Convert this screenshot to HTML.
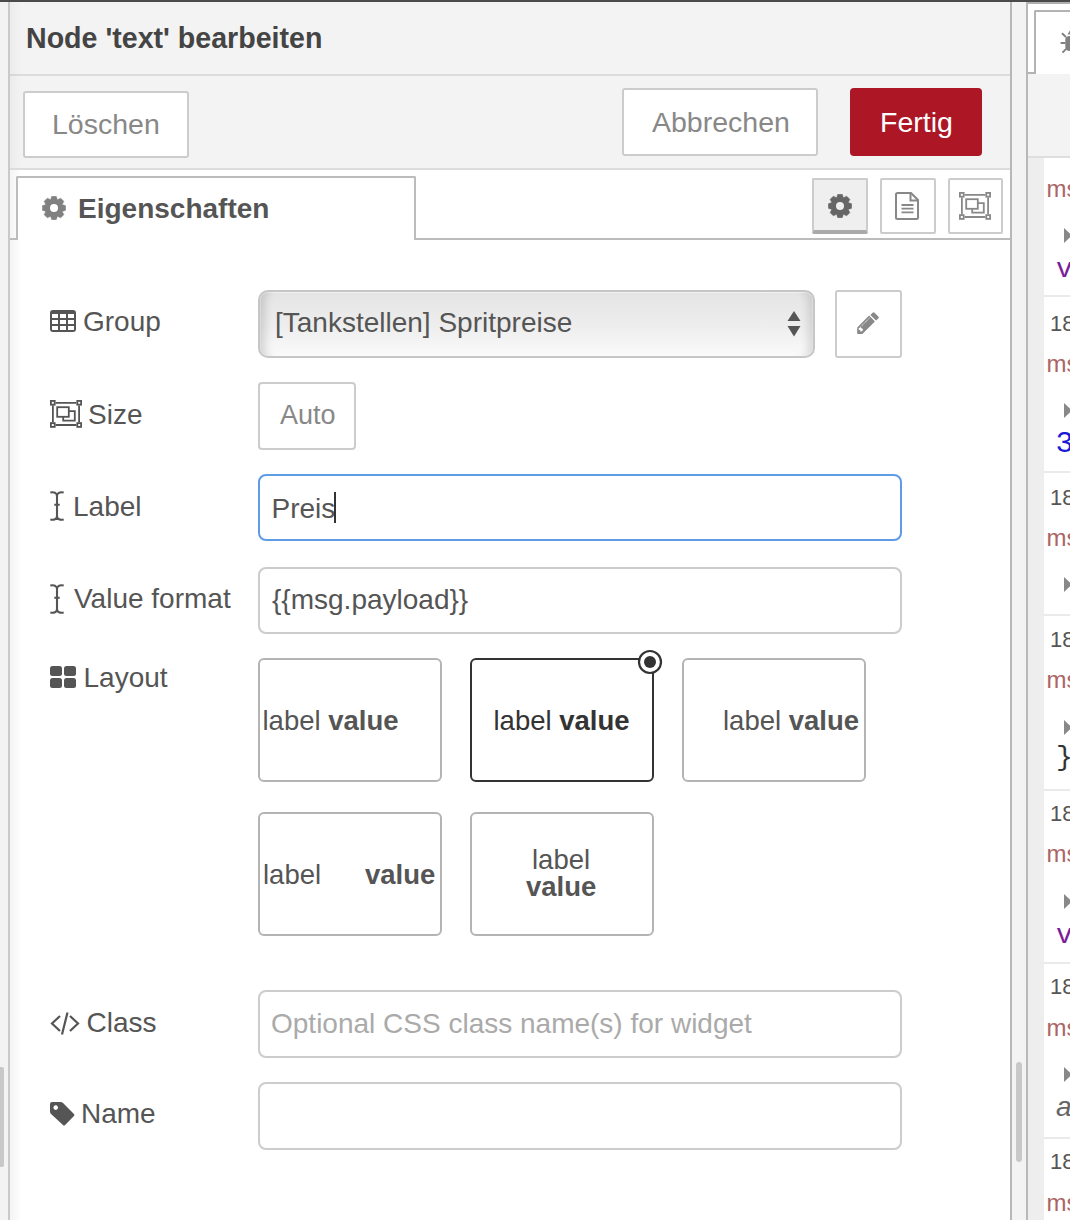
<!DOCTYPE html>
<html><head><meta charset="utf-8">
<style>
*{box-sizing:border-box;margin:0;padding:0}
html,body{width:1070px;height:1220px;overflow:hidden;background:#f3f3f3;font-family:"Liberation Sans",sans-serif;color:#555}
.a{position:absolute}
.t{position:absolute;white-space:nowrap;line-height:1}
#topbar{left:0;top:0;width:1070px;height:2px;background:#4a4a4a}
#dlg{left:8px;top:2px;width:1004px;height:1218px;background:#fff;border-left:2px solid #cacaca;border-right:2px solid #b8b8b8}
#hdr{left:10px;top:2px;width:1000px;height:72px;background:#f3f3f3}
#hdrline{left:10px;top:74px;width:1000px;height:2px;background:#dcdcdc}
#tb{left:10px;top:76px;width:1000px;height:93px;background:#f3f3f3}
#tbline{left:10px;top:168px;width:1000px;height:2px;background:#dcdcdc}
.btn{position:absolute;background:#fff;border:2px solid #ccc;border-radius:3px}
.bt{position:absolute;white-space:nowrap;line-height:1;font-size:28.5px;color:#888}
#tabline{left:10px;top:238px;width:1000px;height:2px;background:#bcbcbc}
#tab{left:16px;top:176px;width:400px;height:64px;background:#fff;border:2px solid #bcbcbc;border-bottom:none;border-radius:2px 2px 0 0}
.ib{position:absolute;top:178px;width:56px;height:56px;background:#fff;border:2px solid #ccc;border-radius:2px}
.lbl{position:absolute;white-space:nowrap;line-height:1;font-size:28px;color:#555}
.inp{position:absolute;left:258px;width:644px;height:67px;border:2px solid #ccc;border-radius:8px;background:#fff}
.lay{position:absolute;width:184px;height:124px;border:2px solid #b4b4b4;border-radius:6px;background:#fff}
.lt{position:absolute;white-space:nowrap;line-height:1;font-size:27.5px;color:#555}
.lt b{font-weight:bold}
/* sidebar */
#sb{left:1026px;top:2px;width:44px;height:1218px;background:#f3f3f3;border-left:2px solid #b8b8b8}
</style></head><body>
<div id="topbar" class="a"></div>
<div id="dlg" class="a"></div>
<div class="a" style="left:10px;top:2px;width:12px;height:1218px;background:linear-gradient(to right,rgba(0,0,0,0.045),rgba(0,0,0,0))"></div>
<div id="hdr" class="a"></div>
<div id="hdrline" class="a"></div>
<div id="tb" class="a"></div>
<div id="tbline" class="a"></div>
<div class="a" style="left:10px;top:2px;width:12px;height:166px;background:linear-gradient(to right,rgba(0,0,0,0.03),rgba(0,0,0,0))"></div>

<div class="t" style="left:26px;top:24px;font-size:28.6px;font-weight:bold;color:#444">Node 'text' bearbeiten</div>

<div class="btn" style="left:22.5px;top:90.5px;width:166px;height:67px"></div>
<div class="bt" style="left:52px;top:110px">Löschen</div>
<div class="btn" style="left:622px;top:88px;width:196px;height:68px"></div>
<div class="bt" style="left:652px;top:107.5px">Abbrechen</div>
<div class="a" style="left:850px;top:88px;width:132px;height:68px;background:#ad1625;border-radius:4px"></div>
<div class="bt" style="left:880px;top:107.5px;color:#fff">Fertig</div>

<div id="tabline" class="a"></div>
<div id="tab" class="a"></div>
<div class="t" style="left:78px;top:195px;font-size:28px;font-weight:bold;color:#555">Eigenschaften</div>
<svg class="a" style="left:42px;top:196px" width="24" height="24" viewBox="0 0 24 24"><path fill="#808080" stroke="#808080" stroke-width="0.5" stroke-linejoin="round" d="M8.59 3.89 L9.71 0.32 L14.29 0.32 L15.41 3.89 L15.33 3.85 L18.64 2.13 L21.87 5.36 L20.15 8.67 L20.11 8.59 L23.68 9.71 L23.68 14.29 L20.11 15.41 L20.15 15.33 L21.87 18.64 L18.64 21.87 L15.33 20.15 L15.41 20.11 L14.29 23.68 L9.71 23.68 L8.59 20.11 L8.67 20.15 L5.36 21.87 L2.13 18.64 L3.85 15.33 L3.89 15.41 L0.32 14.29 L0.32 9.71 L3.89 8.59 L3.85 8.67 L2.13 5.36 L5.36 2.13 L8.67 3.85Z"/><circle cx="12" cy="12" r="4" fill="#fff"/></svg>

<div class="ib" style="left:812px;background:#efefef;border-bottom:4px solid #aaa"></div>
<div class="ib" style="left:880px"></div>
<div class="ib" style="left:948px;width:55px"></div>

<!-- form rows -->
<div class="lbl" style="left:83px;top:308px">Group</div>
<div class="a" style="left:258px;top:290px;width:557px;height:68px;border:2px solid #c6c6c6;border-radius:10px;background:linear-gradient(to bottom,#e4e4e4,#eeeeee 55%,#fafafa);box-shadow:inset 12px 0 9px -7px rgba(0,0,0,0.14),inset -12px 0 9px -7px rgba(0,0,0,0.12),inset 0 0 0 1px rgba(255,255,255,0.6)"></div>
<div class="lbl" style="left:275px;top:309px">[Tankstellen] Spritpreise</div>
<div class="btn" style="left:835px;top:290px;width:67px;height:68px"></div>

<div class="lbl" style="left:88px;top:400.5px">Size</div>
<div class="btn" style="left:258px;top:382px;width:98px;height:68px;border-radius:4px"></div>
<div class="bt" style="left:280px;top:402px;font-size:27px">Auto</div>

<div class="lbl" style="left:73px;top:493px">Label</div>
<div class="inp" style="top:474px;border-color:#5e9ce6"></div>
<div class="lbl" style="left:271.5px;top:494.5px">Preis</div>
<div class="a" style="left:334px;top:492px;width:2px;height:31px;background:#333"></div>

<div class="lbl" style="left:74px;top:585px">Value format</div>
<div class="inp" style="top:566.5px"></div>
<div class="lbl" style="left:272px;top:586px">{{msg.payload}}</div>

<div class="lbl" style="left:83.5px;top:664px">Layout</div>
<div class="lay" style="left:258px;top:658px"></div>
<div class="lt" style="left:262.5px;top:707px">label <b>value</b></div>
<div class="lay" style="left:470px;top:658px;border-color:#333"></div>
<div class="lt" style="left:493.5px;top:707px;color:#333">label <b>value</b></div>
<div class="lay" style="left:682px;top:658px"></div>
<div class="lt" style="left:723px;top:707px">label <b>value</b></div>
<div class="lay" style="left:258px;top:812px"></div>
<div class="lt" style="left:263px;top:861px">label</div>
<div class="lt" style="left:365px;top:861px"><b>value</b></div>
<div class="lay" style="left:470px;top:812px"></div>
<div class="lt" style="left:532px;top:845.5px">label</div>
<div class="lt" style="left:526px;top:873px"><b>value</b></div>

<div class="lbl" style="left:86.5px;top:1009px">Class</div>
<div class="inp" style="top:990px;height:68px"></div>
<div class="lbl" style="left:271px;top:1010px;color:#aaa">Optional CSS class name(s) for widget</div>

<div class="lbl" style="left:81px;top:1100px">Name</div>
<div class="inp" style="top:1082px;height:68px"></div>


<!-- icons -->
<svg class="a" style="left:827.5px;top:194px" width="24" height="24" viewBox="0 0 24 24"><path fill="#666" stroke="#666" stroke-width="0.5" stroke-linejoin="round" d="M8.59 3.89 L9.71 0.32 L14.29 0.32 L15.41 3.89 L15.33 3.85 L18.64 2.13 L21.87 5.36 L20.15 8.67 L20.11 8.59 L23.68 9.71 L23.68 14.29 L20.11 15.41 L20.15 15.33 L21.87 18.64 L18.64 21.87 L15.33 20.15 L15.41 20.11 L14.29 23.68 L9.71 23.68 L8.59 20.11 L8.67 20.15 L5.36 21.87 L2.13 18.64 L3.85 15.33 L3.89 15.41 L0.32 14.29 L0.32 9.71 L3.89 8.59 L3.85 8.67 L2.13 5.36 L5.36 2.13 L8.67 3.85Z"/><circle cx="12" cy="12" r="4" fill="#efefef"/></svg>
<svg class="a" style="left:895px;top:192px" width="24" height="28" viewBox="0 0 24 28"><path d="M3 1H16L23 8V25.5Q23 27 21.5 27H2.5Q1 27 1 25.5V2.5Q1 1 2.5 1z" fill="none" stroke="#888" stroke-width="2"/><path d="M15.5 1V8.5H23" fill="none" stroke="#888" stroke-width="2"/><path d="M6.5 13H18.5M6.5 16.7H18.5M6.5 20.4H18.5" stroke="#888" stroke-width="1.8"/></svg>
<svg class="a" style="left:959px;top:192px" width="32" height="28" viewBox="0 0 32 28"><g fill="none" stroke="#888" stroke-width="1.8"><rect x="0.9" y="0.9" width="3.8" height="3.8"/><rect x="27.3" y="0.9" width="3.8" height="3.8"/><rect x="0.9" y="23.1" width="3.8" height="3.8"/><rect x="27.3" y="23.1" width="3.8" height="3.8"/><path d="M5.6 2.9H26.4M5.6 25H26.4M2.9 5.6V22.2M29.1 5.6V22.2"/><rect x="7.2" y="7.2" width="11.6" height="9.6"/><path d="M18.8 11.1H24.8V20.7H13.2V16.8"/></g></svg>

<svg class="a" style="left:50px;top:310px" width="26" height="22" viewBox="0 0 26 22"><path fill="#555" fill-rule="evenodd" d="M3 0H23Q26 0 26 3V19Q26 22 23 22H3Q0 22 0 19V3Q0 0 3 0z M2 4V8H8V4z M10 4V8H16V4z M18 4V8H24V4z M2 10V14H8V10z M10 10V14H16V10z M18 10V14H24V10z M2 16V19.5Q2 20 3 20H8V16z M10 16V20H16V16z M18 16V20H23Q24 20 24 19.5V16z"/></svg>
<svg class="a" style="left:50px;top:400px" width="32" height="28" viewBox="0 0 32 28"><g fill="none" stroke="#555" stroke-width="1.8"><rect x="0.9" y="0.9" width="3.8" height="3.8"/><rect x="27.3" y="0.9" width="3.8" height="3.8"/><rect x="0.9" y="23.1" width="3.8" height="3.8"/><rect x="27.3" y="23.1" width="3.8" height="3.8"/><path d="M5.6 2.9H26.4M5.6 25H26.4M2.9 5.6V22.2M29.1 5.6V22.2"/><rect x="7.2" y="7.2" width="11.6" height="9.6"/><path d="M18.8 11.1H24.8V20.7H13.2V16.8"/></g></svg>

<svg class="a" style="left:50px;top:491.3px" width="15" height="30" viewBox="0 0 15 30"><g fill="none" stroke="#555" stroke-width="2.1"><path d="M0.3 1.6C3.8 0.8 7 1.6 7 5V25C7 28.4 3.8 29.2 0.3 28.4M13.7 1.6C10.2 0.8 7 1.6 7 5M7 25C7 28.4 10.2 29.2 13.7 28.4M4.3 13.8H9.7"/></g></svg>
<svg class="a" style="left:50px;top:583.5px" width="15" height="30" viewBox="0 0 15 30"><g fill="none" stroke="#555" stroke-width="2.1"><path d="M0.3 1.6C3.8 0.8 7 1.6 7 5V25C7 28.4 3.8 29.2 0.3 28.4M13.7 1.6C10.2 0.8 7 1.6 7 5M7 25C7 28.4 10.2 29.2 13.7 28.4M4.3 13.8H9.7"/></g></svg>

<svg class="a" style="left:50px;top:666px" width="26" height="22" viewBox="0 0 26 22"><g fill="#555"><rect x="0" y="0" width="12" height="10" rx="2.5"/><rect x="14" y="0" width="12" height="10" rx="2.5"/><rect x="0" y="12" width="12" height="10" rx="2.5"/><rect x="14" y="12" width="12" height="10" rx="2.5"/></g></svg>

<svg class="a" style="left:50px;top:1012px" width="30" height="23" viewBox="0 0 30 23"><g fill="none" stroke="#555" stroke-width="2.2"><path d="M10 4L2 11.5L10 19M20 4L28 11.5L20 19M17.5 0.5L12 22.5"/></g></svg>

<svg class="a" style="left:50px;top:1102px" width="25" height="25" viewBox="0 0 24 24"><path fill="#555" fill-rule="evenodd" d="M2 0H10Q11.5 0 12.5 1L23 11.5Q24 12.5 23 13.5L14.5 22Q13.5 23 12.5 22L1 11.5Q0 10.5 0 9V2Q0 0 2 0z M5.5 3.2a2.2 2.2 0 1 0 0.01 0z"/></svg>

<svg class="a" style="left:852px;top:306px" width="32" height="32" viewBox="0 0 32 32"><g fill="#888"><path d="M20.6 6.8Q21.6 5.8 22.6 6.8L26.3 10.5Q27.3 11.5 26.3 12.5L24 14.6L18.4 9z"/><path d="M17.1 9.6L22.9 15.4L10.6 27.8Q10.3 28.1 9.8 28.1H5.7Q5.2 28.1 5.2 27.6V22Q5.2 21.6 5.5 21.3z"/></g><path d="M6.6 22.6L8.4 20.9L11.3 23.7L9.5 25.6Q9 26 8.6 25.6Q8.4 25.4 8.4 24.8Q8.4 24 7.6 23.9Q7 23.8 6.7 23.6Q6.3 23.1 6.6 22.6z" fill="#fff"/><path d="M9 20.4L18 11.6" stroke="#fff" stroke-width="0.9" stroke-dasharray="1.2 0.6"/></svg>

<svg class="a" style="left:787px;top:311px" width="14" height="26" viewBox="0 0 14 26"><g fill="#555"><path d="M7 0L13.5 10H0.5z"/><path d="M0.5 15H13.5L7 25.5z"/></g></svg>

<svg class="a" style="left:637px;top:649px" width="26" height="26" viewBox="0 0 26 26"><circle cx="13" cy="13" r="11" fill="#fff" stroke="#333" stroke-width="2.2"/><circle cx="13" cy="13" r="6" fill="#333"/></svg>

<!-- sidebar -->
<div class="a" style="left:1012px;top:2px;width:14px;height:1218px;background:#f3f3f3"></div>
<div class="a" style="left:1026px;top:2px;width:44px;height:1218px;background:#f3f3f3;border-left:2px solid #b8b8b8"></div>
<div class="a" style="left:1028px;top:2px;width:42px;height:2px;background:#b0b0b0"></div>
<div class="a" style="left:1028px;top:4px;width:42px;height:70px;background:#fff"></div>
<div class="a" style="left:1028px;top:72px;width:8px;height:2px;background:#b3b3b3"></div>
<div class="a" style="left:1034px;top:10px;width:40px;height:64px;background:#fff;border:2px solid #b3b3b3;border-bottom:none;border-radius:2px 2px 0 0"></div>
<svg class="a" style="left:1060px;top:29px" width="10" height="26" viewBox="0 0 10 26"><g fill="#808080"><path d="M5.3 10Q5.5 7 10 7V22Q5.5 22 5.3 18z"/><path d="M7.6 5.6L10 1.2V5.6z"/></g><g stroke="#808080" stroke-width="1.9"><path d="M2 4.3L5.9 8M0.6 14H5.5M2.4 23.6L6.2 19.9"/></g></svg>
<div class="a" style="left:1028px;top:156px;width:42px;height:2px;background:#dedede"></div>
<div class="a" style="left:1028px;top:158px;width:16px;height:1062px;background:#eeeeee"></div>
<div class="a" style="left:1044px;top:158px;width:26px;height:1062px;background:#fff"></div>
<div class="a" style="left:1044px;top:295px;width:26px;height:2px;background:#eaeaea"></div>
<div class="a" style="left:1044px;top:471px;width:26px;height:2px;background:#eaeaea"></div>
<div class="a" style="left:1044px;top:614px;width:26px;height:2px;background:#eaeaea"></div>
<div class="a" style="left:1044px;top:789px;width:26px;height:2px;background:#eaeaea"></div>
<div class="a" style="left:1044px;top:962px;width:26px;height:2px;background:#eaeaea"></div>
<div class="a" style="left:1044px;top:1137px;width:26px;height:2px;background:#eaeaea"></div>
<div class="t" style="left:1050px;top:313px;font-size:22px;color:#555">18:</div>
<div class="t" style="left:1050px;top:487px;font-size:22px;color:#555">18:</div>
<div class="t" style="left:1050px;top:629px;font-size:22px;color:#555">18:</div>
<div class="t" style="left:1050px;top:803px;font-size:22px;color:#555">18:</div>
<div class="t" style="left:1050px;top:976px;font-size:22px;color:#555">18:</div>
<div class="t" style="left:1050px;top:1151px;font-size:22px;color:#555">18:</div>
<div class="t" style="left:1046.5px;top:176px;margin-top:1px;font-size:24px;color:#a66">msg</div>
<div class="t" style="left:1046.5px;top:351px;margin-top:1px;font-size:24px;color:#a66">msg</div>
<div class="t" style="left:1046.5px;top:525px;margin-top:1px;font-size:24px;color:#a66">msg</div>
<div class="t" style="left:1046.5px;top:667px;margin-top:1px;font-size:24px;color:#a66">msg</div>
<div class="t" style="left:1046.5px;top:841px;margin-top:1px;font-size:24px;color:#a66">msg</div>
<div class="t" style="left:1046.5px;top:1015px;margin-top:1px;font-size:24px;color:#a66">msg</div>
<div class="t" style="left:1046.5px;top:1190px;margin-top:1px;font-size:24px;color:#a66">msg</div>
<svg class="a" style="left:1064px;top:228px" width="8" height="15"><path d="M0 0L8 7.5L0 15z" fill="#888"/></svg>
<svg class="a" style="left:1064px;top:403px" width="8" height="15"><path d="M0 0L8 7.5L0 15z" fill="#888"/></svg>
<svg class="a" style="left:1064px;top:577px" width="8" height="15"><path d="M0 0L8 7.5L0 15z" fill="#888"/></svg>
<svg class="a" style="left:1064px;top:720px" width="8" height="15"><path d="M0 0L8 7.5L0 15z" fill="#888"/></svg>
<svg class="a" style="left:1064px;top:894px" width="8" height="15"><path d="M0 0L8 7.5L0 15z" fill="#888"/></svg>
<svg class="a" style="left:1064px;top:1067px" width="8" height="15"><path d="M0 0L8 7.5L0 15z" fill="#888"/></svg>
<div class="t" style="left:1056px;top:256px;font-size:28px;color:#7a1e9a;font-family:'Liberation Mono',monospace">v</div>
<div class="t" style="left:1055.5px;top:429px;font-size:30px;color:#1a1ad6;font-family:'Liberation Mono',monospace">3</div>
<div class="t" style="left:1056px;top:744px;font-size:28px;color:#333;font-family:'Liberation Mono',monospace">}</div>
<div class="t" style="left:1056px;top:922px;font-size:28px;color:#7a1e9a;font-family:'Liberation Mono',monospace">v</div>
<div class="t" style="left:1056px;top:1092.5px;font-size:28px;color:#666;font-style:italic">a</div>
<div class="a" style="left:1016px;top:1062px;width:6px;height:100px;background:#c8c8c8;border-radius:3px"></div>
<div class="a" style="left:0px;top:1067px;width:4px;height:100px;background:#c8c8c8;border-radius:0 2px 2px 0"></div>
</body></html>
